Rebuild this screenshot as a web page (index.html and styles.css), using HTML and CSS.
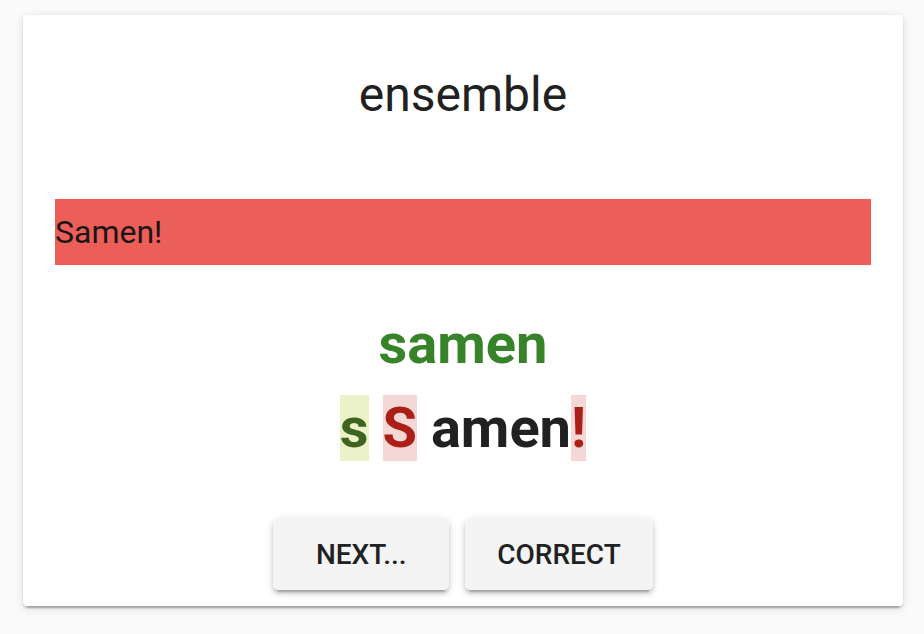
FILE: index.html
```html
<!DOCTYPE html>
<html lang="nl">
<head>
<meta charset="utf-8">
<title>ensemble</title>
<link rel="stylesheet" href="styles.css">
</head>
<body>
<main class="card">
  <h1 class="prompt">ensemble</h1>
  <div class="answer-bar">Samen!</div>
  <div class="expected">samen</div>
  <div class="diff"><span class="mark mark-missing">s</span> <span class="mark mark-wrong">S</span> amen<span class="mark mark-wrong">!</span></div>
  <div class="actions">
    <button class="btn">Next...</button>
    <button class="btn">Correct</button>
  </div>
</main>
</body>
</html>
```

FILE: styles.css
```css
html, body {
  margin: 0;
  padding: 0;
}

body {
  background: #fafafa;
  font-family: Roboto, "Liberation Sans", sans-serif;
  color: #212121;
  height: 634px;
  overflow: hidden;
}

.card {
  box-sizing: border-box;
  width: 880px;
  height: 591px;
  margin: 15px 0 0 23px;
  padding: 32px 32px 16px;
  background: #fff;
  border-radius: 4px;
  box-shadow: 0 2px 2px rgba(0, 0, 0, 0.14), 0 6px 2px -4px rgba(0, 0, 0, 0.2), 0 2px 10px rgba(0, 0, 0, 0.12);
}

.prompt {
  margin: 16px 0 0;
  font-size: 48px;
  font-weight: 400;
  line-height: 64px;
  text-align: center;
  color: #212121;
}

.answer-bar {
  margin-top: 72px;
  height: 66px;
  display: flex;
  align-items: center;
  background: #ec5f58;
  font-size: 32px;
  color: #1c1414;
}

.expected {
  margin-top: 46px;
  font-size: 56px;
  font-weight: 700;
  line-height: 66px;
  text-align: center;
  color: #37832a;
}

.diff {
  margin-top: 18px;
  font-size: 56px;
  font-weight: 700;
  text-align: center;
  color: #212121;
}

.mark-missing {
  background: #ecf2c8;
  color: #3f6422;
}

.mark-wrong {
  background: #f5d8d6;
  color: #ab1f16;
}

.actions {
  margin-top: 57px;
  display: flex;
  justify-content: center;
  gap: 16px;
}

.btn {
  min-width: 176px;
  height: 72px;
  padding: 0 32px;
  border: none;
  border-radius: 5px;
  background: #f4f4f4;
  font-family: Roboto, "Liberation Sans", sans-serif;
  font-size: 28px;
  font-weight: 500;
  text-transform: uppercase;
  color: #212121;
  box-shadow: 0 6px 2px -4px rgba(0, 0, 0, 0.2), 0 4px 4px rgba(0, 0, 0, 0.14), 0 2px 10px rgba(0, 0, 0, 0.12);
}
```
